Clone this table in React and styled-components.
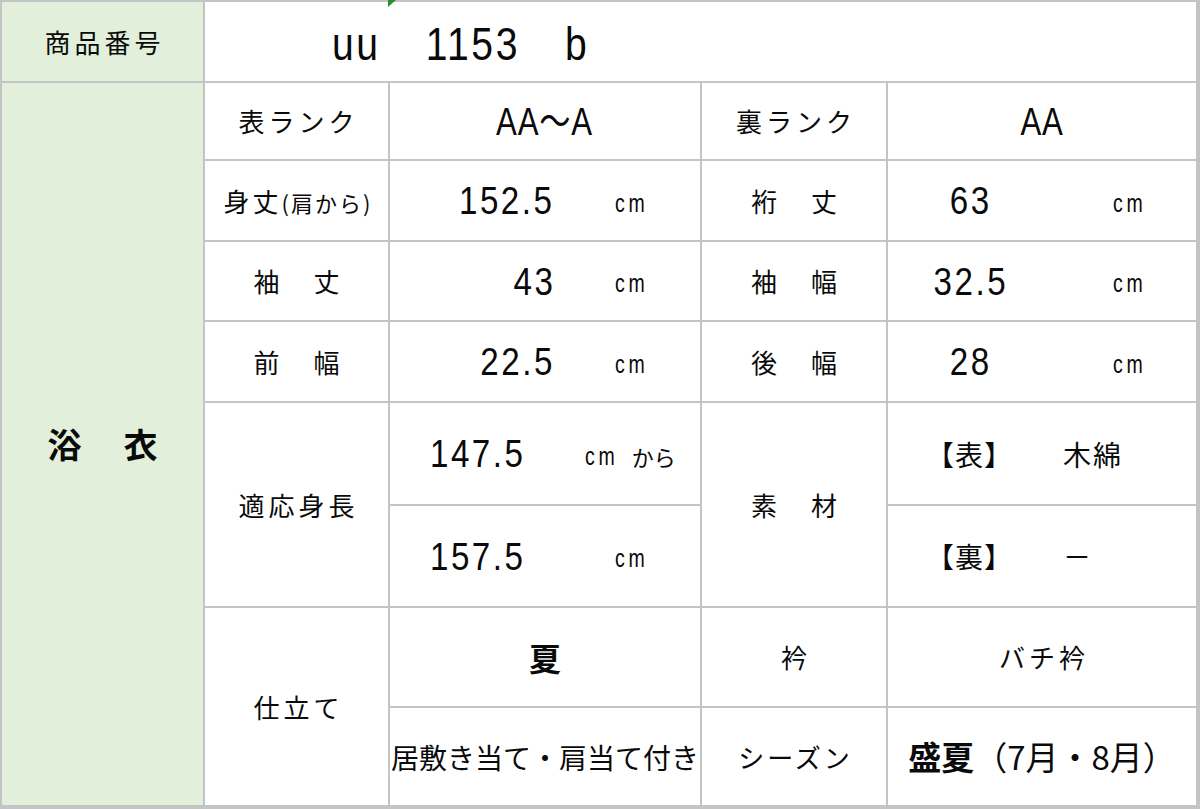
import React from 'react'
import styled, { createGlobalStyle } from 'styled-components'

const LATIN = `"Liberation Sans", Arial, "Noto Sans CJK JP", sans-serif`
const JP = `"Noto Sans CJK JP", sans-serif`

const GlobalStyle = createGlobalStyle`
  html, body {
    margin: 0;
    padding: 0;
    background: #fff;
  }
  body {
    font-family: ${JP};
    color: #0a0a0a;
  }
`

const Sheet = styled.div`
  position: relative;
  box-sizing: border-box;
  width: 1200px;
  height: 809px;
  display: grid;
  grid-template-columns: 201px 183px 310px 184px 308px;
  grid-template-rows: 79px 76px 79px 78px 79px 101px 100px 98px 97px;
  gap: 2px;
  padding: 2px 4px 4px 2px;
  background: #c4c4c4;
`

const Cell = styled.div`
  grid-column: span ${p => p.$cols || 1};
  grid-row: span ${p => p.$rows || 1};
  background: ${p => (p.$green ? '#e2efda' : '#fff')};
  display: flex;
  align-items: center;
  justify-content: ${p => p.$justify || 'center'};
  padding-left: ${p => p.$pad || 0}px;
  padding-top: ${p => p.$top || 0}px;
  min-width: 0;
  white-space: nowrap;
`

const Marker = styled.div`
  position: absolute;
  top: 0;
  left: 388px;
  width: 0;
  height: 0;
  border-top: 7px solid #2f8f2f;
  border-right: 8px solid transparent;
`

// Latin text in the sheet is a tall, narrow gothic: squeeze Liberation Sans
const Narrow = styled.span`
  display: inline-block;
  transform: scaleX(${p => p.$sx || 0.85});
  transform-origin: ${p => p.$origin || 'left'} center;
`

const Label = styled.span`
  font-family: ${JP};
  font-size: ${p => p.$size || 26}px;
  font-weight: ${p => (p.$bold ? 700 : 400)};
  letter-spacing: ${p => p.$spacing ?? 4}px;
  padding-left: ${p => p.$spacing ?? 4}px;
  line-height: 1;
`

const Small = styled.span`
  font-size: 22px;
  letter-spacing: 2px;
`

const ProductNo = styled.div`
  display: flex;
  gap: 53px;
  font-family: ${LATIN};
  font-size: 46px;
  letter-spacing: 3px;
  line-height: 1;
`

const Rank = styled.span`
  font-family: ${LATIN};
  font-size: 39px;
  letter-spacing: 1px;
  line-height: 1;
`

const Num = styled.span`
  width: ${p => p.$w}px;
  flex: none;
  text-align: ${p => p.$align || 'right'};
  font-family: ${LATIN};
  font-size: 39px;
  letter-spacing: 3px;
  line-height: 1;
`

const Unit = styled.span`
  display: flex;
  align-items: center;
  margin-left: ${p => p.$gap}px;
  margin-top: 4px;
  font-family: ${LATIN};
  font-size: 26px;
  letter-spacing: 5px;
  line-height: 1;
`

const Kana = styled.span`
  margin-left: 2px;
  font-family: ${JP};
  font-size: 22px;
  letter-spacing: 0;
`

const Side = styled.span`
  width: ${p => (p.$w ? `${p.$w}px` : 'auto')};
  flex: none;
  font-family: ${JP};
  font-size: 28px;
  letter-spacing: ${p => p.$spacing ?? 2}px;
  line-height: 1;
`

const Season = styled.span`
  font-family: ${JP};
  font-size: 33px;
  line-height: 1;
`

const SeasonStrong = styled.span`
  font-weight: 700;
`

const measures = [
  { label: <>身丈<Small>(肩から)</Small></>, spacing: 3, left: '152.5', rightLabel: '裄　丈', right: '63' },
  { label: '袖　丈', left: '43', rightLabel: '袖　幅', right: '32.5' },
  { label: '前　幅', left: '22.5', rightLabel: '後　幅', right: '28' },
]

function Measure({ value, w, align, gap, children }) {
  const origin = align === 'center' ? 'center' : 'right'
  return (
    <Cell $justify="flex-start">
      <Num $w={w} $align={align}>
        <Narrow $origin={origin}>{value}</Narrow>
      </Num>
      <Unit $gap={gap}>
        <Narrow $sx={0.75}>cm</Narrow>
        {children}
      </Unit>
    </Cell>
  )
}

export default function App() {
  return (
    <>
      <GlobalStyle />
      <Sheet>
        <Marker />
        <Cell $green><Label>商品番号</Label></Cell>
        <Cell $cols={4} $justify="flex-start" $pad={127} $top={4}>
          <Narrow>
            <ProductNo>
              <span>uu</span>
              <span>1153</span>
              <span>b</span>
            </ProductNo>
          </Narrow>
        </Cell>

        <Cell $green $rows={8}><Label $size={34} $bold>浴　衣</Label></Cell>

        <Cell><Label>表ランク</Label></Cell>
        <Cell><Rank><Narrow $sx={0.8} $origin="center">AA～A</Narrow></Rank></Cell>
        <Cell><Label>裏ランク</Label></Cell>
        <Cell><Rank><Narrow $sx={0.8} $origin="center">AA</Narrow></Rank></Cell>

        {measures.map(m => (
          <React.Fragment key={m.left}>
            <Cell><Label $spacing={m.spacing}>{m.label}</Label></Cell>
            <Measure value={m.left} w={165} gap={60} />
            <Cell><Label>{m.rightLabel}</Label></Cell>
            <Measure value={m.right} w={166} align="center" gap={59} />
          </React.Fragment>
        ))}

        <Cell $rows={2}><Label>適応身長</Label></Cell>
        <Measure value="147.5" w={136} gap={59}><Kana>から</Kana></Measure>
        <Cell $rows={2}><Label>素　材</Label></Cell>
        <Cell $justify="flex-start" $pad={38}>
          <Side $w={137} $spacing={1}>【表】</Side>
          <Side>木綿</Side>
        </Cell>
        <Measure value="157.5" w={136} gap={89} />
        <Cell $justify="flex-start" $pad={38}>
          <Side $w={137} $spacing={1}>【裏】</Side>
          <Side>－</Side>
        </Cell>

        <Cell $rows={2}><Label>仕立て</Label></Cell>
        <Cell><Label $size={32} $bold $spacing={0}>夏</Label></Cell>
        <Cell><Label>衿</Label></Cell>
        <Cell><Label>バチ衿</Label></Cell>
        <Cell><Label $size={28} $spacing={0}>居敷き当て・肩当て付き</Label></Cell>
        <Cell><Label $spacing={3}>シーズン</Label></Cell>
        <Cell>
          <Season>
            <SeasonStrong>盛夏</SeasonStrong>（7月・8月）
          </Season>
        </Cell>
      </Sheet>
    </>
  )
}
